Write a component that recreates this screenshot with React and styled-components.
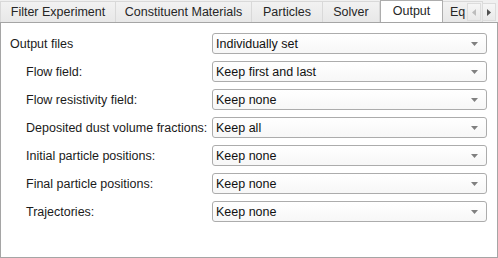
import React from 'react';
import styled, { createGlobalStyle } from 'styled-components';

const GlobalStyle = createGlobalStyle`
  html, body {
    margin: 0;
    padding: 0;
    background: #f0f0f0;
  }
  body {
    font-family: "Liberation Sans", Arial, sans-serif;
    font-size: 12px;
    color: #1b1b1b;
  }
`;

const Window = styled.div`
  width: 498px;
  height: 258px;
  display: flex;
  flex-direction: column;
  background: #f0f0f0;
`;

const TabBar = styled.div`
  height: 22px;
  display: flex;
  align-items: flex-end;
  position: relative;
  overflow: hidden;
`;

const Tab = styled.div`
  flex: 0 0 ${p => p.width}px;
  box-sizing: border-box;
  height: ${p => (p.active ? 23 : 21)}px;
  display: flex;
  align-items: center;
  justify-content: center;
  white-space: nowrap;
  overflow: hidden;
  font-size: 12.5px;
  color: #262626;
  border: 1px solid ${p => (p.active ? '#adadad' : '#d9d9d9')};
  border-bottom: none;
  border-left: ${p => (p.first || p.active ? '1px solid' : 'none')} ${p => (p.active ? '#adadad' : '#d9d9d9')};
  background: ${p => (p.active ? '#ffffff' : 'linear-gradient(#f2f2f2, #e8e8e8)')};
  margin-bottom: ${p => (p.active ? '-1px' : '0')};
  padding-bottom: ${p => (p.active ? '3px' : '0')};
  z-index: ${p => (p.active ? 2 : 1)};
  justify-content: ${p => (p.clip ? 'flex-start' : 'center')};
  padding-left: ${p => (p.clip ? '7px' : '0')};
`;

const Scroller = styled.div`
  position: absolute;
  right: 2px;
  top: 3px;
  display: flex;
  z-index: 3;
`;

const ScrollButton = styled.div`
  width: 14px;
  height: 18px;
  box-sizing: border-box;
  border: 1px solid #dcdcdc;
  background: linear-gradient(#f6f6f6, #e9e9e9);
  display: flex;
  align-items: center;
  justify-content: center;
  & + & {
    margin-left: 1px;
  }
`;

const Pane = styled.div`
  flex: 1;
  box-sizing: border-box;
  background: #ffffff;
  border: 1px solid #a5a5a5;
  padding: 10px 0 0 0;
  display: flex;
  flex-direction: column;
  gap: 7px;
`;

const Row = styled.div`
  display: grid;
  grid-template-columns: 211px 275px;
  align-items: center;
  height: 21px;
`;

const Label = styled.div`
  padding-left: ${p => (p.sub ? 25 : 9)}px;
  font-size: 12.5px;
  white-space: nowrap;
  color: #1b1b1b;
`;

const Combo = styled.div`
  height: 21px;
  box-sizing: border-box;
  border: 1px solid #acacac;
  border-radius: 3px;
  background: linear-gradient(#ffffff, #f7f7f7);
  display: flex;
  align-items: center;
  justify-content: space-between;
  padding: 0 8px 0 3px;
  font-size: 12.5px;
  color: #111;
`;

const Arrow = () => (
  <svg width="7" height="4" viewBox="0 0 7 4">
    <path d="M0 0 H7 L3.5 4 Z" fill="#808080" />
  </svg>
);

const SmallArrow = ({ dir }) => (
  <svg width="4" height="7" viewBox="0 0 4 7">
    {dir === 'left'
      ? <path d="M4 0 V7 L0 3.5 Z" fill="#bdbdbd" />
      : <path d="M0 0 V7 L4 3.5 Z" fill="#505050" />}
  </svg>
);

const tabs = [
  { name: 'Filter Experiment', width: 116 },
  { name: 'Constituent Materials', width: 136 },
  { name: 'Particles', width: 71 },
  { name: 'Solver', width: 57 },
  { name: 'Output', width: 63, active: true },
  { name: 'Equations', width: 40, clip: true },
];

const rows = [
  { label: 'Output files', value: 'Individually set' },
  { label: 'Flow field:', value: 'Keep first and last', sub: true },
  { label: 'Flow resistivity field:', value: 'Keep none', sub: true },
  { label: 'Deposited dust volume fractions:', value: 'Keep all', sub: true },
  { label: 'Initial particle positions:', value: 'Keep none', sub: true },
  { label: 'Final particle positions:', value: 'Keep none', sub: true },
  { label: 'Trajectories:', value: 'Keep none', sub: true },
];

const App = () => (
  <Window>
    <GlobalStyle />
    <TabBar>
      {tabs.map((t, i) => (
        <Tab key={t.name} width={t.width} active={t.active} first={i === 0} clip={t.clip}>
          {t.clip ? 'Eq' : t.name}
        </Tab>
      ))}
      <Scroller>
        <ScrollButton><SmallArrow dir="left" /></ScrollButton>
        <ScrollButton><SmallArrow dir="right" /></ScrollButton>
      </Scroller>
    </TabBar>
    <Pane>
      {rows.map(r => (
        <Row key={r.label}>
          <Label sub={r.sub}>{r.label}</Label>
          <Combo>
            <span>{r.value}</span>
            <Arrow />
          </Combo>
        </Row>
      ))}
    </Pane>
  </Window>
);

export default App;
